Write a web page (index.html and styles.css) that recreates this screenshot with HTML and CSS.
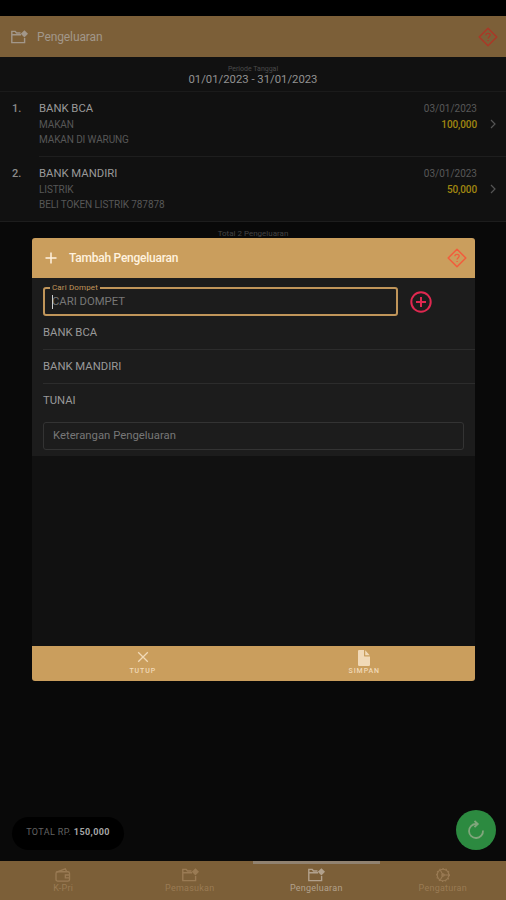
FILE: index.html
```html
<!DOCTYPE html>
<html lang="id">

<head>
  <meta charset="utf-8">
  <meta name="viewport" content="width=device-width">
  <title>Pengeluaran</title>
  <link rel="stylesheet" href="styles.css">
</head>

<body>
  <svg class="defs" width="0" height="0">
    <symbol id="folder" viewBox="0 0 18 14">
      <path d="M10.5 3H6.5L5.2 1.4H1.8V12.6H14.6V8M1.8 4.8H11" fill="none" stroke="currentColor" stroke-width="1.4"/>
      <path d="M14.4.2L18 3.8 14.4 7.4 10.8 3.8Z" fill="currentColor"/>
    </symbol>
    <symbol id="help" viewBox="0 0 20 20">
      <path d="M10 1.2L18.8 10 10 18.8 1.2 10Z" fill="none" stroke="currentColor" stroke-width="1.5" stroke-linejoin="round"/>
      <path d="M7.9 8.2C7.9 5.6 12.2 5.7 12.2 8.1C12.2 9.6 10.1 9.8 10.1 11.6M10.1 12.9V14.1" fill="none" stroke="currentColor" stroke-width="1.3"/>
    </symbol>
    <symbol id="next" viewBox="0 0 6 10">
      <path d="M1 1L5 5 1 9" fill="none" stroke="currentColor" stroke-width="1.2"/>
    </symbol>
  </svg>

  <div class="page">
    <div class="statusbar"></div>
    <div class="navbar">
      <svg class="nav-icon"><use href="#folder"/></svg>
      <div class="title">Pengeluaran</div>
      <svg class="help"><use href="#help"/></svg>
    </div>

    <div class="period">
      <div class="period-label">Periode Tanggal</div>
      <div class="period-date">01/01/2023 - 31/01/2023</div>
    </div>

    <div class="list">
      <div class="item">
        <div class="no">1.</div>
        <div class="inner">
          <div class="info">
            <div class="name">BANK BCA</div>
            <div class="note">MAKAN</div>
            <div class="note">MAKAN DI WARUNG</div>
          </div>
          <div class="after">
            <div class="date">03/01/2023</div>
            <div class="amount">100,000</div>
          </div>
          <svg class="chevron"><use href="#next"/></svg>
        </div>
      </div>
      <div class="item">
        <div class="no">2.</div>
        <div class="inner">
          <div class="info">
            <div class="name">BANK MANDIRI</div>
            <div class="note">LISTRIK</div>
            <div class="note">BELI TOKEN LISTRIK 787878</div>
          </div>
          <div class="after">
            <div class="date">03/01/2023</div>
            <div class="amount">50,000</div>
          </div>
          <svg class="chevron"><use href="#next"/></svg>
        </div>
      </div>
    </div>
    <div class="count">Total 2 Pengeluaran</div>

    <div class="bottom">
      <div class="total">TOTAL RP. <b>150,000</b></div>
      <div class="fab">
        <svg width="20" height="20" viewBox="0 0 20 20" fill="none" stroke="currentColor" stroke-width="1.8">
          <path d="M17 10.5A7 7 0 1 1 10 4H11"/>
          <path d="M8.5 1L11.8 4 8.5 7.2"/>
        </svg>
      </div>
    </div>

    <div class="tabbar">
      <div class="tab">
        <svg width="18" height="14" viewBox="0 0 18 15" fill="none" stroke="currentColor" stroke-width="1.4">
          <rect x="1.5" y="4" width="14.5" height="10" rx="1.8"/>
          <path d="M2 4.5L11.5 1 13 4M16 7.5H11.5V10.5H16"/>
        </svg>
        <span>K-Pri</span>
      </div>
      <div class="tab">
        <svg width="18" height="14"><use href="#folder"/></svg>
        <span>Pemasukan</span>
      </div>
      <div class="tab active">
        <svg width="18" height="14"><use href="#folder"/></svg>
        <span>Pengeluaran</span>
      </div>
      <div class="tab">
        <svg width="16" height="14" viewBox="0 0 16 16" fill="none" stroke="currentColor" stroke-width="1.3">
          <circle cx="8" cy="8" r="6.6"/>
          <circle cx="8" cy="8" r="7.4" stroke-dasharray="1.5 2.2"/>
          <path d="M5 2.5L8 8 5 13.5M8 8H14.5"/>
          <circle cx="8" cy="8" r="1.4"/>
        </svg>
        <span>Pengaturan</span>
      </div>
    </div>
  </div>

  <div class="popup">
    <div class="popup-head">
      <svg class="plus" viewBox="0 0 12 12"><path d="M6 .5V11.5M.5 6H11.5" stroke="currentColor" stroke-width="1.5"/></svg>
      <div class="popup-title">Tambah Pengeluaran</div>
      <svg class="help"><use href="#help"/></svg>
    </div>

    <div class="form">
      <div class="search">
        <div class="field focused">
          <span class="label">Cari Dompet</span>
          <i class="caret"></i>CARI DOMPET
        </div>
        <svg class="add" viewBox="0 0 22 22" fill="none" stroke="currentColor" stroke-width="2">
          <circle cx="11" cy="11" r="9.7"/>
          <path d="M11 6V16M6 11H16"/>
        </svg>
      </div>
      <div class="option">BANK BCA</div>
      <div class="option">BANK MANDIRI</div>
      <div class="option">TUNAI</div>
      <div class="field">Keterangan Pengeluaran</div>
    </div>

    <div class="popup-foot">
      <div class="action">
        <svg width="14" height="14" viewBox="0 0 14 14"><path d="M2.2 2.2L11.8 11.8M11.8 2.2L2.2 11.8" stroke="currentColor" stroke-width="1.3"/></svg>
        <span>TUTUP</span>
      </div>
      <div class="action">
        <svg class="doc" width="14" height="16" viewBox="0 0 14 16">
          <path d="M2 0H7V5.5C7 6.2 7.3 6.5 8 6.5H13V14.8Q13 16 11.8 16H2.2Q1 16 1 14.8V1.2Q1 0 2 0ZM8.2.3L12.7 5.2H8.2Z" fill="currentColor"/>
        </svg>
        <span>SIMPAN</span>
      </div>
    </div>
  </div>
</body>

</html>
```
FILE: styles.css
```css
* {
  box-sizing: border-box;
}

body {
  margin: 0;
  height: 900px;
  overflow: hidden;
  background-color: #090909;
  color: #8c8c8c;
  font-family: Roboto, "Liberation Sans", sans-serif;
  font-size: 11px;
}

svg {
  display: block;
  flex: none;
}

.defs {
  position: absolute;
}

.page {
  display: flex;
  flex-direction: column;
  height: 900px;
}

.statusbar {
  height: 16px;
  background-color: #000;
}

.navbar {
  display: flex;
  align-items: center;
  height: 41px;
  padding: 0 8px 0 10px;
  background-color: #7c5f38;
  color: #a2978a;
}

.nav-icon {
  width: 18px;
  height: 14px;
}

.title {
  flex: 1;
  margin-left: 9px;
  padding-top: 1px;
  font-size: 12px;
  letter-spacing: -0.1px;
}

.help {
  width: 20px;
  height: 20px;
  color: #ab3827;
}

.period {
  height: 35px;
  padding-top: 8px;
  background-color: #111;
  border-bottom: 1px solid #1b1b1b;
  text-align: center;
}

.period-label {
  color: #4b4b4b;
  font-size: 7px;
  line-height: 8px;
}

.period-date {
  color: #929292;
  font-size: 11.3px;
  line-height: 14px;
}

.list {
  background-color: #111;
  border-bottom: 1px solid #1d1d1d;
}

.item {
  display: flex;
  height: 65px;
}

.item:last-child {
  height: 64px;
}

.no {
  width: 39px;
  padding: 10px 0 0 12px;
  color: #8c8c8c;
  font-weight: 500;
  line-height: 14px;
}

.inner {
  display: flex;
  flex: 1;
  padding: 9px 10px 0 0;
  border-bottom: 1px solid #1e1e1e;
}

.item:last-child .inner {
  border-bottom: none;
}

.info {
  flex: 1;
}

.name {
  color: #999;
  font-size: 11.3px;
  line-height: 16px;
}

.note {
  color: #575757;
  font-size: 10px;
  letter-spacing: -0.1px;
  line-height: 15px;
}

.after {
  text-align: right;
}

.date {
  color: #585858;
  font-size: 10px;
  line-height: 15px;
}

.amount {
  color: #a18810;
  font-size: 10px;
  font-weight: 500;
  letter-spacing: -0.1px;
  line-height: 17px;
}

.chevron {
  width: 6px;
  height: 10px;
  margin: 18px 0 0 13px;
  color: #555;
}

.count {
  padding-top: 7px;
  color: #444;
  font-size: 8px;
  line-height: 10px;
  text-align: center;
}

.bottom {
  display: flex;
  justify-content: space-between;
  align-items: flex-end;
  margin-top: auto;
  padding: 0 10px 11px 12px;
}

.total {
  width: 112px;
  height: 33px;
  border-radius: 17px;
  background-color: #000;
  color: #626262;
  font-size: 9px;
  letter-spacing: 0.4px;
  line-height: 31px;
  text-align: center;
}

.total b {
  color: #a5a5a5;
}

.fab {
  display: flex;
  align-items: center;
  justify-content: center;
  width: 40px;
  height: 40px;
  border-radius: 50%;
  background-color: #2c8a40;
  color: #80a67c;
}

.tabbar {
  display: flex;
  height: 39px;
  background-color: #7c5f38;
}

.tab {
  display: flex;
  flex: 1;
  flex-direction: column;
  align-items: center;
  padding-top: 4px;
  border-top: 3px solid #7c5f38;
  color: #9a7b54;
  font-size: 9px;
  letter-spacing: 0.25px;
  line-height: 13px;
}

.tab.active {
  border-top-color: #918270;
  color: #b2a18c;
}

.popup {
  position: absolute;
  top: 238px;
  left: 32px;
  display: flex;
  flex-direction: column;
  width: 443px;
  height: 443px;
  border-radius: 3px;
  background-color: #111;
  overflow: hidden;
}

.popup-head {
  display: flex;
  align-items: center;
  height: 40px;
  padding: 0 8px 0 13px;
  background-color: #ca9e5d;
  color: #fff2df;
}

.plus {
  width: 12px;
  height: 12px;
}

.popup-title {
  flex: 1;
  margin-left: 12px;
  font-size: 12px;
  font-weight: 500;
  letter-spacing: -0.25px;
}

.popup-head .help {
  color: #f25c3c;
}

.form {
  height: 178px;
  padding: 9px 0 0 11px;
  background-color: #1c1c1c;
}

.search {
  display: flex;
  align-items: center;
}

.field {
  position: relative;
  width: 421px;
  height: 28px;
  margin-top: 5px;
  padding-left: 9px;
  border: 1px solid #333;
  border-radius: 3px;
  color: #777;
  font-size: 11.3px;
  line-height: 26px;
}

.field.focused {
  width: 355px;
  height: 29px;
  margin-top: 0;
  padding-left: 7px;
  border: 2px solid #c0955a;
}

.label {
  position: absolute;
  top: -6px;
  left: 5px;
  padding: 0 2px;
  background-color: #1c1c1c;
  color: #c0955a;
  font-size: 8px;
  letter-spacing: 0.15px;
  line-height: 9px;
}

.caret {
  position: absolute;
  top: 6px;
  left: 7px;
  width: 1px;
  height: 14px;
  background-color: #ccc;
}

.add {
  width: 22px;
  height: 22px;
  margin-left: 12px;
  color: #e02850;
}

.option {
  height: 34px;
  border-bottom: 1px solid #2c2c2c;
  color: #999;
  font-size: 11.3px;
  line-height: 33px;
}

.option:nth-child(4) {
  height: 33px;
  border-bottom: none;
  line-height: 34px;
}

.popup-foot {
  display: flex;
  height: 35px;
  margin-top: auto;
  background-color: #ca9e5d;
}

.action {
  display: flex;
  flex: 1;
  flex-direction: column;
  align-items: center;
  padding-top: 4px;
  color: #f1d9b7;
  font-size: 7px;
  font-weight: 500;
  letter-spacing: 0.9px;
}

.action span {
  margin-top: 3px;
  line-height: 8px;
}

.doc {
  margin-bottom: -2px;
}
```
